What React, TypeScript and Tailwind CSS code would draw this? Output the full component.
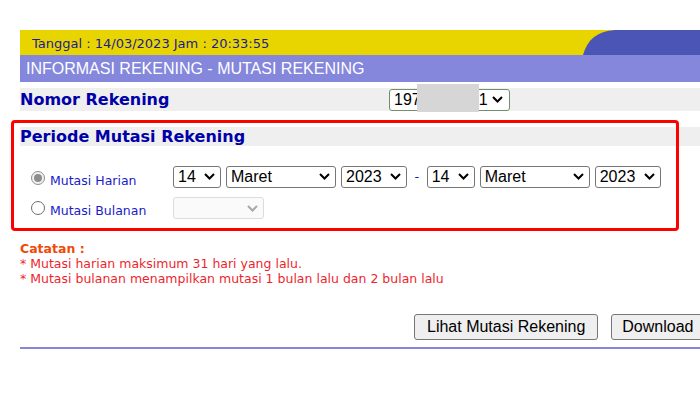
import React from "react";

const Chevron = ({ color = "#000" }: { color?: string }) => (
  <svg width="11" height="7" viewBox="0 0 11 7" className="shrink-0">
    <path d="M1 1 L5.5 5.5 L10 1" fill="none" stroke={color} strokeWidth="2" />
  </svg>
);

const Sel = ({ w, value, disabled = false }: { w: string; value: string; disabled?: boolean }) => (
  <div
    className={`${w} h-[22px] flex items-center justify-between pl-[4px] pr-[5px] rounded-[3px] border ${
      disabled ? "border-[#dcdcdc] bg-[#fafafa]" : "border-[#767676] bg-white"
    } text-[16px] leading-none text-black`}
    style={{ fontFamily: "'Liberation Sans', Arial, sans-serif" }}
  >
    <span>{value}</span>
    <Chevron color={disabled ? "#a8a8a8" : "#000"} />
  </div>
);

const Radio = ({ checked }: { checked?: boolean }) => (
  <div
    className={`w-[14px] h-[14px] rounded-full border flex items-center justify-center ${
      checked ? "border-[#8d8d8d] bg-[#f2f2f2]" : "border-[#6e6e6e] bg-white"
    }`}
  >
    {checked && <div className="w-[8px] h-[8px] rounded-full bg-[#8d8d8d]" />}
  </div>
);

export default function App() {
  const verdana = { fontFamily: "'DejaVu Sans', Verdana, sans-serif" };
  const arial = { fontFamily: "'Liberation Sans', Arial, sans-serif" };
  return (
    <div className="w-[700px] h-[394px] overflow-hidden bg-white relative">
      <div className="pt-[30px] pl-[20px] w-[760px]">
        {/* Yellow date bar */}
        <div className="h-[25px] bg-[#e8d500] flex items-center relative w-[680px]">
          <span className="pl-[12px] pt-[3px] text-[13px] text-[#1c1c8e]" style={verdana}>
            Tanggal : 14/03/2023 Jam : 20:33:55
          </span>
          <svg className="absolute right-0 top-0" width="117" height="25" viewBox="0 0 117 25">
            <path d="M0 25 C4 10 14 1 32 0 L117 0 L117 25 Z" fill="#4b55b6" />
          </svg>
        </div>
        {/* Purple header */}
        <div className="h-[27px] bg-[#8487dc] flex items-center w-[680px]">
          <span className="pl-[6px] text-[16px] text-white" style={arial}>
            INFORMASI REKENING - MUTASI REKENING
          </span>
        </div>
        {/* Nomor rekening */}
        <div className="mt-[6px] h-[23px] bg-[#efefef] flex items-center w-[680px]">
          <span className="w-[369px] text-[16px] font-bold text-[#0000a8] leading-none" style={verdana}>
            Nomor Rekening
          </span>
          <div className="relative">
            <div
              className="w-[121px] h-[22px] flex items-center pl-[4px] pr-[6px] rounded-[3px] border border-[#6f8f6f] bg-white text-[16px] text-black"
              style={arial}
            >
              <span>197</span>
              <span className="w-[58px]" />
              <span>1</span>
              <span className="flex-1" />
              <Chevron />
            </div>
            <div className="absolute left-[28px] top-[-5px] w-[62px] h-[28px] bg-[#d6d6d6]" />
          </div>
        </div>
        {/* Periode */}
        <div className="mt-[16px] h-[19px] bg-[#efefef] flex items-center w-[680px]">
          <span className="text-[16px] font-bold text-[#0000a8] leading-none" style={verdana}>
            Periode Mutasi Rekening
          </span>
        </div>
        <div className="mt-[17px] flex flex-col gap-[5px]">
          <div className="flex items-center">
            <div className="w-[153px] flex items-center pl-[11px] gap-[5px] pt-[3px]">
              <Radio checked />
              <span className="text-[12.5px] text-[#1a1acc] pt-[6px]" style={verdana}>
                Mutasi Harian
              </span>
            </div>
            <div className="flex items-center gap-[5px]">
              <Sel w="w-[48px]" value="14" />
              <Sel w="w-[110px]" value="Maret" />
              <Sel w="w-[66px]" value="2023" />
              <span className="text-[13px] text-[#1a1acc] px-[2.5px]" style={verdana}>-</span>
              <Sel w="w-[48px]" value="14" />
              <Sel w="w-[110px]" value="Maret" />
              <Sel w="w-[66px]" value="2023" />
            </div>
          </div>
          <div className="flex items-center">
            <div className="w-[153px] flex items-center pl-[11px] gap-[5px]">
              <Radio />
              <span className="text-[12.5px] text-[#1a1acc] pt-[6px]" style={verdana}>
                Mutasi Bulanan
              </span>
            </div>
            <Sel w="w-[91px]" value="" disabled />
          </div>
        </div>
        {/* Catatan */}
        <div className="mt-[20px] text-[12.5px] leading-[15px]" style={verdana}>
          <div className="font-bold text-[#ef4a0a]">Catatan :</div>
          <div className="text-[#ee1f2e]">* Mutasi harian maksimum 31 hari yang lalu.</div>
          <div className="text-[#ee1f2e]">* Mutasi bulanan menampilkan mutasi 1 bulan lalu dan 2 bulan lalu</div>
        </div>
        {/* Buttons */}
        <div className="mt-[28px] flex gap-[13px] pl-[394px]">
          <button
            className="h-[26px] px-[12px] bg-[#efefef] border border-[#767676] rounded-[3px] text-[16px] text-black"
            style={arial}
          >
            Lihat Mutasi Rekening
          </button>
          <button
            className="h-[26px] pl-[10px] pr-[30px] bg-[#efefef] border border-[#767676] rounded-[3px] text-[16px] text-black"
            style={arial}
          >
            Download
          </button>
        </div>
        <div className="mt-[7px] h-[2px] w-[680px] bg-[#8487dc]" />
      </div>
      {/* Red annotation box */}
      <div className="absolute left-[11px] top-[120px] w-[668px] h-[111px] border-[3px] border-[#ff0000] rounded-[4px]" />
    </div>
  );
}
